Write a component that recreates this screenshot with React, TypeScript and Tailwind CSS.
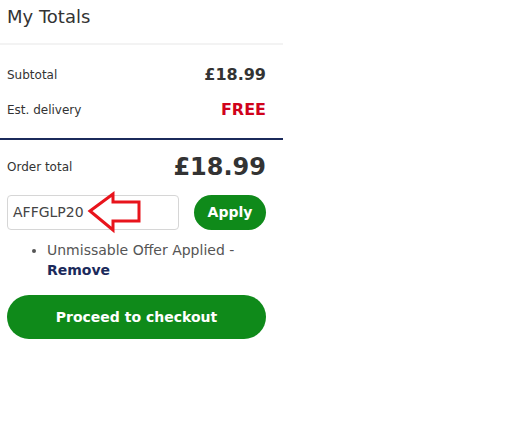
export default function App() {
  return (
    <div className="w-[520px] h-[436px] bg-white text-[#333] font-['DejaVu_Sans',sans-serif]">
      <div className="w-[283px]">
        <div className="h-[45px] pl-[7px] pt-[3px] text-[18px] border-b-2 border-[#f3f3f3]">My Totals</div>
        <div className="px-[7px] pr-[17px]">
          <div className="flex justify-between items-center h-[54px] pt-[5px]">
            <span className="text-[12px]">Subtotal</span>
            <span className="text-[16px] font-bold">£18.99</span>
          </div>
          <div className="flex justify-between items-center h-[24px] -mt-[1px]">
            <span className="text-[12px]">Est. delivery</span>
            <span className="text-[16px] font-bold text-[#d0021b]">FREE</span>
          </div>
        </div>
        <div className="mt-[16px] h-[2px] bg-[#1b2a5b]" />
        <div className="px-[7px] pr-[17px]">
          <div className="flex justify-between items-center h-[54px]">
            <span className="text-[12px]">Order total</span>
            <span className="text-[24px] font-bold">£18.99</span>
          </div>
          <div className="flex justify-between items-center mt-[1px]">
            <div className="relative w-[172px] h-[35px] border border-[#d6d6d6] rounded-[4px] flex items-center pl-[5px] text-[14px] text-[#444]">
              AFFGLP20
              <svg className="absolute left-[79px] top-[-5px]" width="56" height="44" viewBox="0 0 56 44">
                <path d="M3 20 L26 3 L26 11 L52 11 L52 30 L26 30 L26 39 Z" fill="none" stroke="#e8141c" strokeWidth="3" strokeLinejoin="miter" />
              </svg>
            </div>
            <button className="w-[72px] h-[35px] rounded-full bg-[#0f8a1a] text-white font-bold text-[14px]">Apply</button>
          </div>
          <ul className="list-disc pl-[40px] mt-[10px] text-[14px] text-[#555] leading-[20px]">
            <li>
              Unmissable Offer Applied -<br />
              <span className="font-bold text-[#1b2a5b]">Remove</span>
            </li>
          </ul>
          <button className="mt-[15px] w-full h-[44px] rounded-full bg-[#0f8a1a] text-white font-bold text-[14px]">
            Proceed to checkout
          </button>
        </div>
      </div>
    </div>
  );
}
